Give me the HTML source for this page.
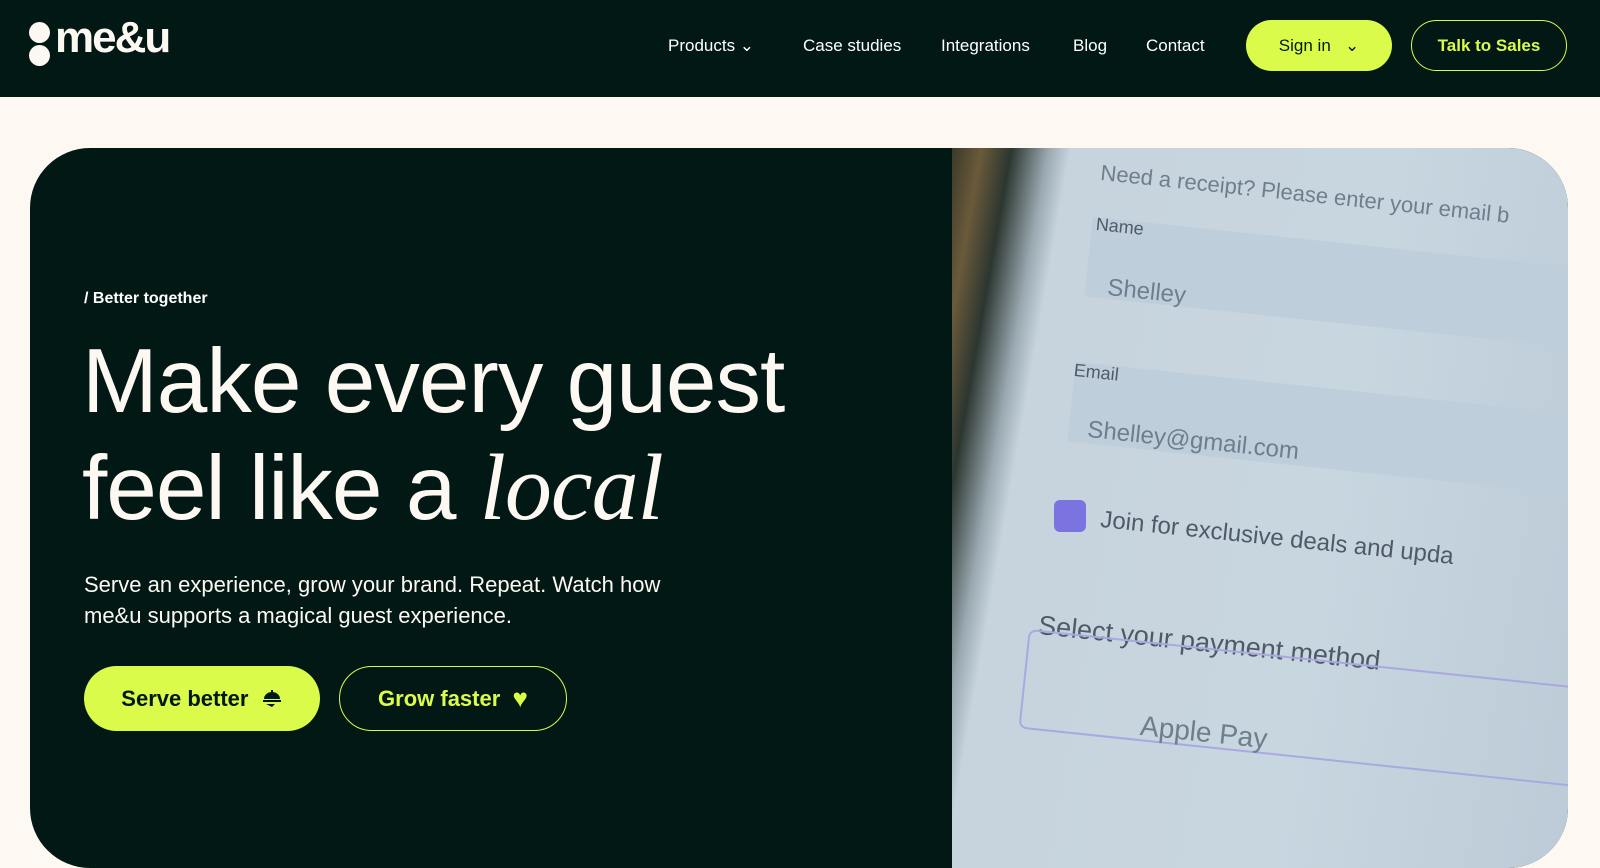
<!DOCTYPE html>
<html><head><meta charset="utf-8"><style>
*{margin:0;padding:0;box-sizing:border-box}
body{width:1600px;height:816px;overflow:hidden;background:#fdf8f2;font-family:"Liberation Sans",sans-serif}
.nav{position:absolute;left:0;top:0;width:1600px;height:97px;background:#011815}
.logo{position:absolute;left:29px;top:22px;color:#fdf8f2}
.logo .d{position:absolute;width:21px;height:21px;border-radius:50%;background:#fdf8f2;left:0}
.logo span{position:absolute;left:26px;top:-6px;font-size:44px;font-weight:bold;letter-spacing:-2px;line-height:1}
.links a{position:absolute;top:36px;color:#fff;font-size:17px;text-decoration:none}
.btn{position:absolute;border-radius:40px;font-weight:bold;display:flex;align-items:center;justify-content:center}
.hero{position:absolute;left:30px;top:148px;width:1538px;height:720px;border-radius:60px;background:#011815;overflow:hidden}
.photo{position:absolute;left:922px;top:0;right:0;bottom:0;background:linear-gradient(100deg,#3b3a2a 0,#6a5a3a 4%,#2c3630 8%,#9aa8b0 13%,#c7d4de 16%,#c8d6e0 60%,#bccbd7 100%)}
.ph{position:absolute;color:#6f7e8c;transform:rotate(6deg);transform-origin:left top;white-space:nowrap;font-size:24px}
</style></head><body>
<div class="nav">
 <div class="logo"><div class="d" style="top:0"></div><div class="d" style="top:23px"></div><span>me&amp;u</span></div>
 <div class="links">
  <a style="left:668px">Products &#8964;</a>
  <a style="left:803px">Case studies</a>
  <a style="left:941px">Integrations</a>
  <a style="left:1073px">Blog</a>
  <a style="left:1146px">Contact</a>
 </div>
 <div class="btn" style="left:1246px;top:20px;width:146px;height:51px;background:#dbfb4a;color:#011815;font-size:17px;font-weight:normal">Sign in &nbsp;&nbsp;&#8964;</div>
 <div class="btn" style="left:1411px;top:20px;width:156px;height:51px;border:1.5px solid #dbfb4a;color:#dbfb4a;font-size:17px">Talk to Sales</div>
</div>
<div class="hero">
 <div class="photo">
  <div style="position:absolute;left:135px;top:100px;width:600px;height:80px;background:#bfcedb;transform:rotate(6deg)"></div>
  <div style="position:absolute;left:118px;top:245px;width:600px;height:80px;background:#bfcedb;transform:rotate(6deg)"></div>
  <div class="ph" style="left:150px;top:12px;font-size:22px">Need a receipt? Please enter your email b</div>
  <div class="ph" style="left:145px;top:66px;font-size:18px;color:#4f5a66">Name</div>
  <div class="ph" style="left:157px;top:126px">Shelley</div>
  <div class="ph" style="left:123px;top:212px;font-size:18px;color:#4f5a66">Email</div>
  <div class="ph" style="left:137px;top:268px">Shelley@gmail.com</div>
  <div style="position:absolute;left:102px;top:352px;width:32px;height:32px;border-radius:6px;background:#7b74e0"></div>
  <div class="ph" style="left:150px;top:358px;color:#4f5a66">Join for exclusive deals and upda</div>
  <div class="ph" style="left:88px;top:462px;font-size:27px;color:#4f5a66">Select your payment method</div>
  <div style="position:absolute;left:70px;top:512px;width:600px;height:100px;border:2px solid #a9a8e0;border-radius:8px;transform:rotate(6deg)"></div>
  <div class="ph" style="left:190px;top:562px;font-size:28px">Apple Pay</div>
 </div>
 <div style="position:absolute;left:54px;top:142px;color:#fff;font-size:16px;font-weight:bold">/ Better together</div>
 <div style="position:absolute;left:52px;top:180px;color:#fdf8f2;font-size:91px;line-height:107px;letter-spacing:-1px">Make every guest<br>feel like a <i style="font-family:'Liberation Serif',serif;font-size:94px">local</i></div>
 <div style="position:absolute;left:54px;top:421px;color:#fdf8f2;font-size:22px;line-height:31px">Serve an experience, grow your brand. Repeat. Watch how<br>me&amp;u supports a magical guest experience.</div>
 <div class="btn" style="left:54px;top:518px;width:236px;height:65px;background:#dbfb4a;color:#011815;font-size:22px">Serve better &nbsp;<svg width="22" height="22" viewBox="0 0 22 22"><path d="M3 11a8 7 0 0 1 16 0z M10 2h2v3h-2z M2 12h18v2H2z M5 16h9l-3 3" fill="#011815"/></svg></div>
 <div class="btn" style="left:309px;top:518px;width:228px;height:65px;border:1.5px solid #dbfb4a;color:#dbfb4a;font-size:22px">Grow faster &nbsp;<span style="font-size:26px">&#9829;</span></div>
</div>
</body></html>
